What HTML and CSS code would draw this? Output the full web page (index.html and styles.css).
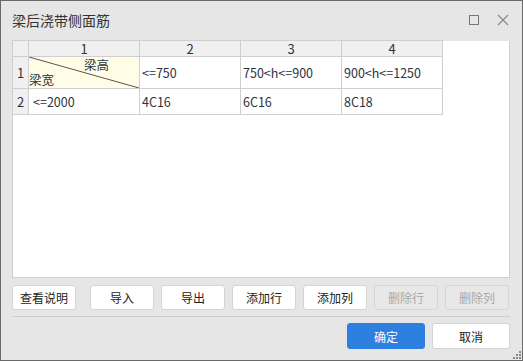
FILE: index.html
```html
<!DOCTYPE html>
<html lang="zh-CN">
<head>
  <meta charset="UTF-8" />
  <title>梁后浇带侧面筋</title>
  <link rel="stylesheet" href="styles.css">
</head>
<body>
  <div class="dialog">
    <header class="titlebar">
      <span class="title">梁后浇带侧面筋</span>
      <div class="win-btns">
        <svg class="win-icon" width="12" height="12" viewBox="0 0 12 12"><rect x="1.5" y="1.5" width="9" height="9" fill="none" stroke="#777" stroke-width="1"/></svg>
        <svg class="win-icon" width="12" height="12" viewBox="0 0 12 12"><path d="M1 1 L11 11 M11 1 L1 11" stroke="#888" stroke-width="1.1" fill="none"/></svg>
      </div>
    </header>

    <div class="grid-box">
      <table class="grid">
        <colgroup>
          <col class="c-head"><col class="c1"><col class="c2"><col class="c3"><col class="c4">
        </colgroup>
        <tr class="head-row">
          <th></th><th>1</th><th>2</th><th>3</th><th>4</th>
        </tr>
        <tr class="row-1">
          <th>1</th>
          <td class="diag">
            <svg class="diag-line" width="110" height="31" viewBox="0 0 110 31" preserveAspectRatio="none"><line x1="0" y1="0" x2="110" y2="31" stroke="#555" stroke-width="1"/></svg>
            <span class="diag-top">梁高</span>
            <span class="diag-bottom">梁宽</span>
          </td>
          <td>&lt;=750</td>
          <td>750&lt;h&lt;=900</td>
          <td>900&lt;h&lt;=1250</td>
        </tr>
        <tr class="row-2">
          <th>2</th>
          <td class="first">&lt;=2000</td>
          <td>4C16</td>
          <td>6C16</td>
          <td>8C18</td>
        </tr>
      </table>
    </div>

    <div class="tools">
      <button class="btn help">查看说明</button>
      <button class="btn">导入</button>
      <button class="btn">导出</button>
      <button class="btn">添加行</button>
      <button class="btn">添加列</button>
      <button class="btn" disabled>删除行</button>
      <button class="btn" disabled>删除列</button>
    </div>

    <hr class="sep">

    <footer class="actions">
      <button class="btn primary">确定</button>
      <button class="btn cancel">取消</button>
    </footer>

    <svg class="grip" width="8" height="8" viewBox="0 0 8 8">
      <rect x="6" y="0" width="2" height="2" fill="#888"/>
      <rect x="3" y="3" width="2" height="2" fill="#888"/>
      <rect x="6" y="3" width="2" height="2" fill="#888"/>
      <rect x="0" y="6" width="2" height="2" fill="#888"/>
      <rect x="3" y="6" width="2" height="2" fill="#888"/>
      <rect x="6" y="6" width="2" height="2" fill="#888"/>
    </svg>
  </div>
</body>
</html>
```

FILE: styles.css
```css
:root {
  --bg: #e6e6e6;
  --line: #cfcfcf;
  --text: #222;
  --cell-text: #2b3340;
}

* {
  box-sizing: border-box;
}

body {
  margin: 0;
  font-family: "Noto Sans CJK SC", "Noto Sans", sans-serif;
  font-size: 12px;
  color: var(--text);
  background: var(--bg);
}

.dialog {
  position: relative;
  width: 523px;
  height: 361px;
  border: 1px solid #6a6a6a;
  background: var(--bg);
  display: flex;
  flex-direction: column;
}

.titlebar {
  height: 40px;
  display: flex;
  align-items: center;
  justify-content: space-between;
  padding: 0 13px 0 11px;
}

.title {
  font-size: 14px;
  color: #333;
  margin-top: -2px;
}

.win-btns {
  display: flex;
  gap: 17px;
  align-items: center;
  margin-top: -2px;
}

.win-icon {
  display: block;
}

.grid-box {
  margin: 0 12px 0 11px;
  height: 237px;
  background: #fff;
  border: 1px solid var(--line);
  border-top: none;
}

.grid {
  border-collapse: collapse;
  table-layout: fixed;
  margin: -1px 0 0 -1px;
}

.c-head { width: 16px; }
.c1 { width: 111px; }
.c2 { width: 101px; }
.c3 { width: 101px; }
.c4 { width: 101px; }

.grid th,
.grid td {
  border: 1px solid var(--line);
  padding: 0 2px;
  font-weight: normal;
  font-size: 12.5px;
  white-space: nowrap;
  color: var(--cell-text);
}

.grid th {
  background: #f0f0f0;
  text-align: center;
  color: #333;
  font-size: 13px;
}

.head-row th {
  height: 16px;
  line-height: 14px;
}

.row-1 td,
.row-1 th {
  height: 32px;
}

.row-2 td,
.row-2 th {
  height: 26px;
}

.grid td.first {
  padding-left: 4px;
}

.grid td.diag {
  position: relative;
  background: #fffde6;
  padding: 0;
}

.diag-line {
  position: absolute;
  left: 0;
  top: 0;
  width: 100%;
  height: 100%;
}

.diag-top {
  position: absolute;
  left: 55px;
  top: 0;
  line-height: 16px;
}

.diag-bottom {
  position: absolute;
  left: 0;
  bottom: 0;
  line-height: 16px;
}

.tools {
  display: flex;
  gap: 7px;
  margin: 7px 12px 0 11px;
}

.tools .help {
  margin-right: 7px;
}

.btn {
  width: 64px;
  height: 25px;
  padding: 0;
  font-family: inherit;
  font-size: 12px;
  color: #222;
  background: #fff;
  border: 1px solid #d4d4d4;
  border-radius: 3px;
}

.btn:disabled {
  background: #e8e8e8;
  color: #a8a8a8;
  border-color: #d6d6d6;
}

.sep {
  margin: 6px 12px 0 11px;
  border: none;
  border-top: 1px solid #cdcdcd;
  height: 0;
}

.actions {
  display: flex;
  justify-content: flex-end;
  gap: 7px;
  margin: 6px 12px 0 0;
}

.actions .btn {
  width: 78px;
  height: 26px;
}

.btn.primary {
  background: #2e80e0;
  border-color: #2e80e0;
  color: #fff;
}

.grip {
  position: absolute;
  right: 1px;
  bottom: 1px;
}
```
